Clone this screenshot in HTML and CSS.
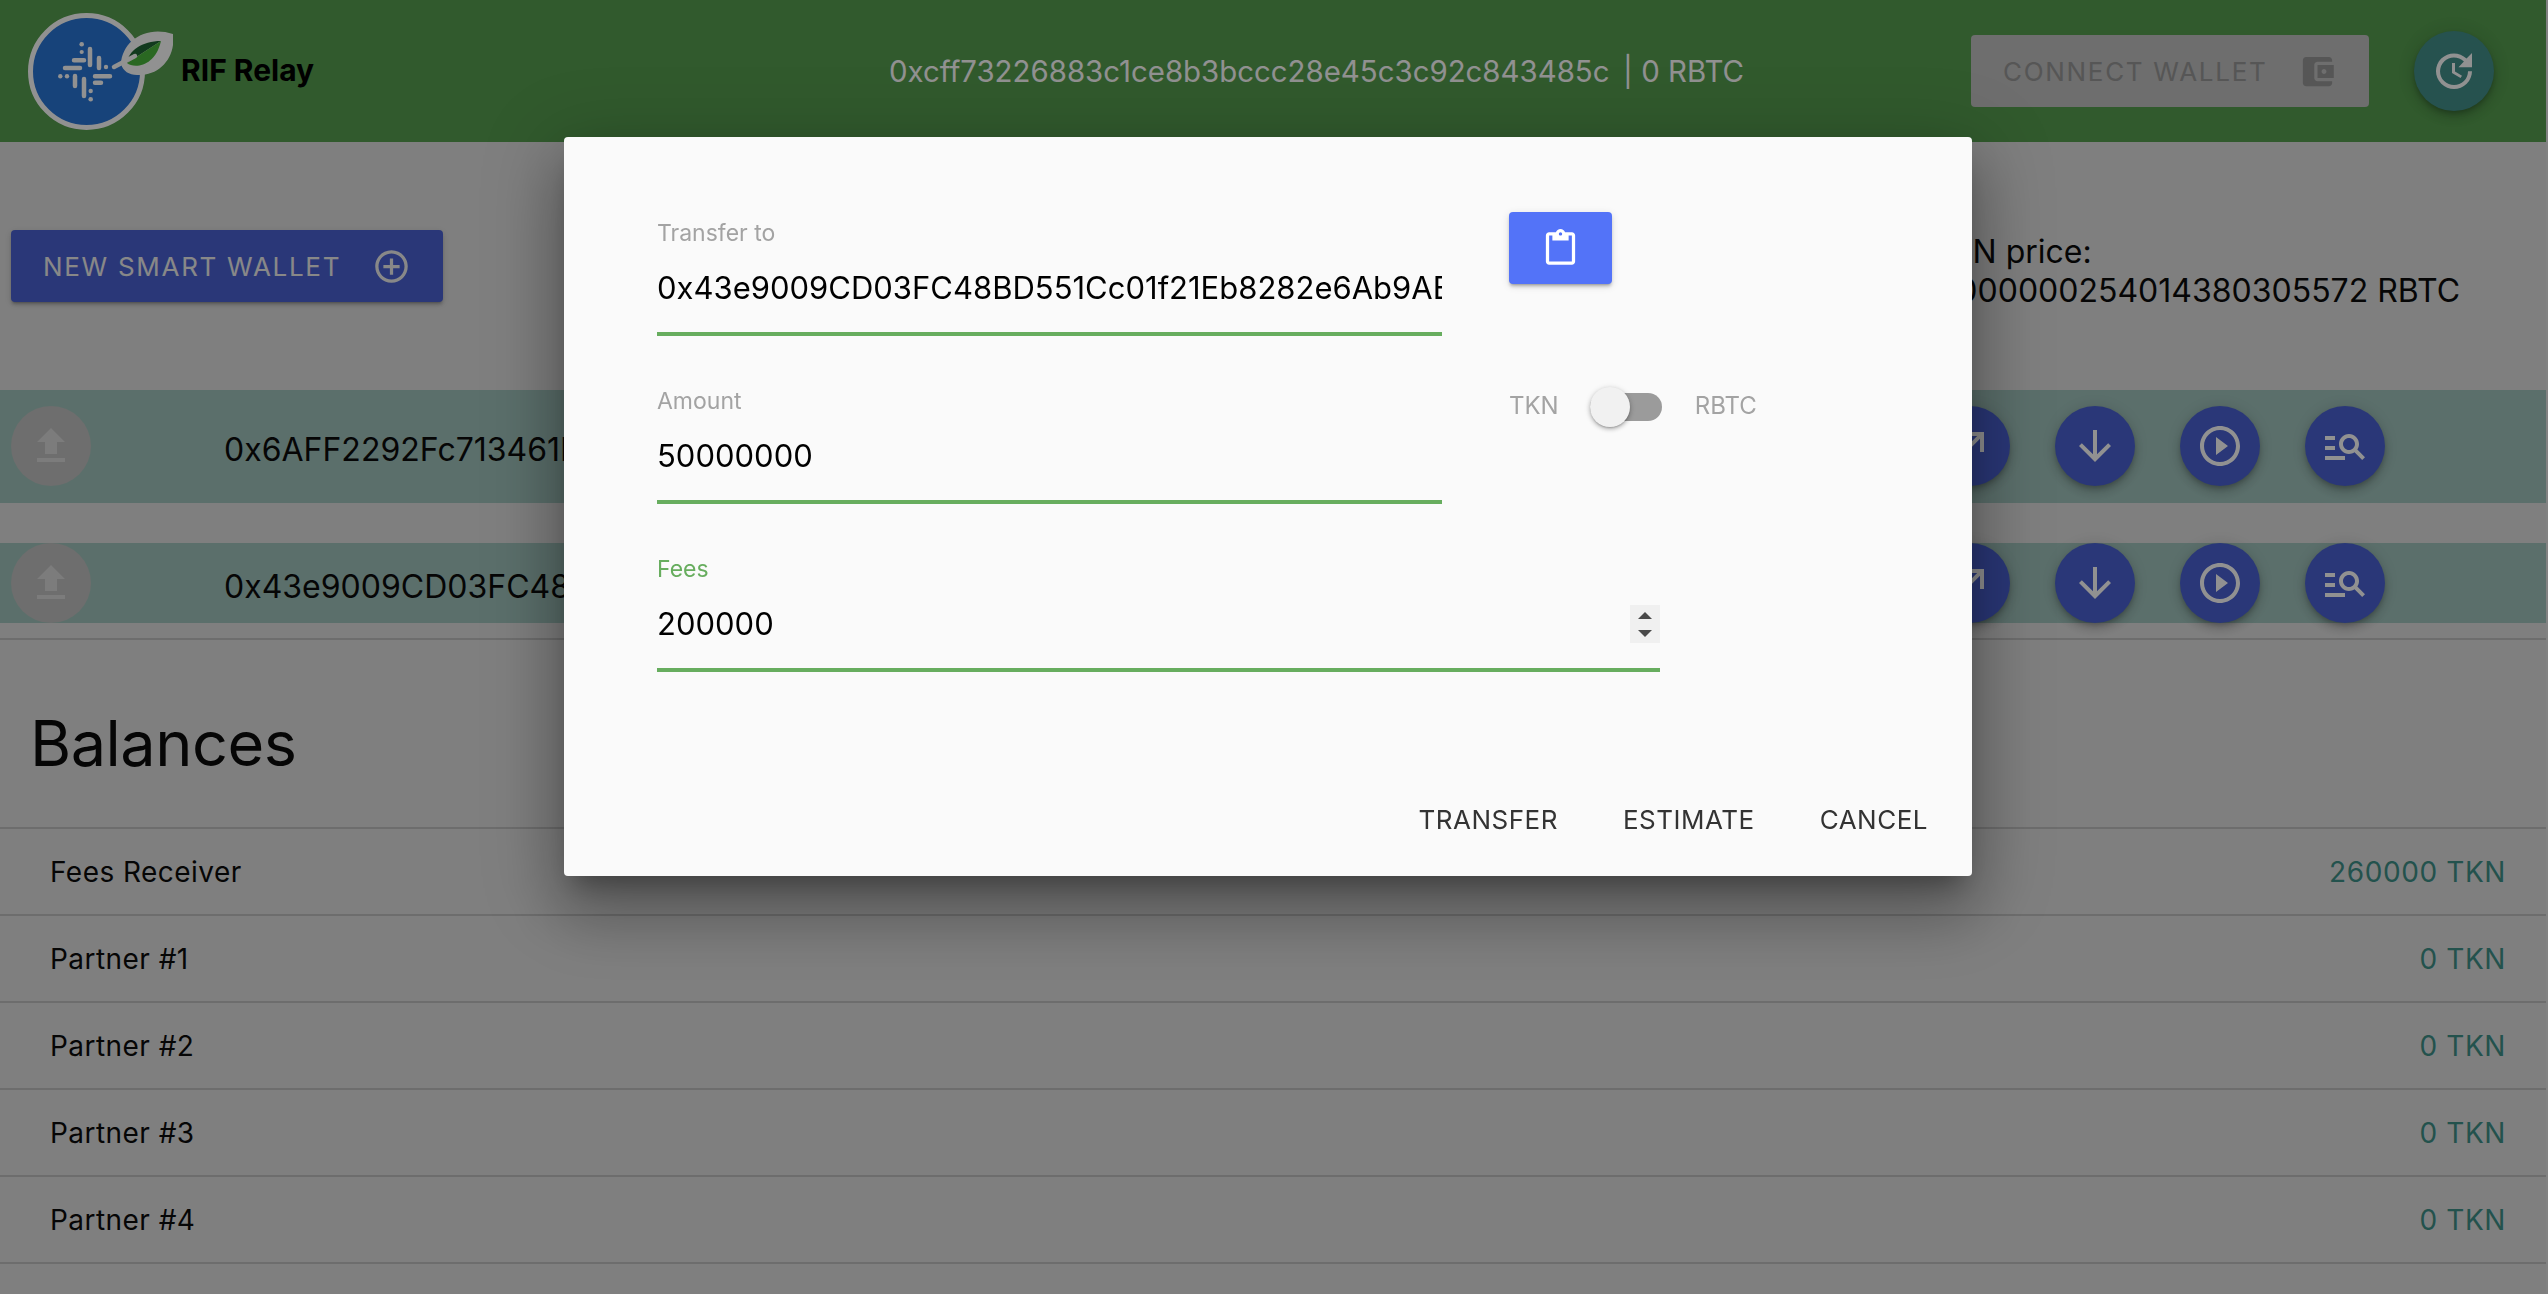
FILE: index.html
```html
<!DOCTYPE html>
<html lang="en">
<head>
<meta charset="utf-8">
<title>RIF Relay</title>
<link rel="stylesheet" href="styles.css">
</head>
<body>
<div class="page">
  <header class="topbar">
    <div class="brand">
      <svg class="logo" viewBox="28 12 145 117" aria-hidden="true">
        <circle cx="86.5" cy="70.5" r="56" fill="#2a76d6" stroke="#fff" stroke-width="5"/>
        <path d="M121 63C122 40 146 24 173 33C176 56 160 75 137 74C129 74 123 70 121 63Z" fill="#fff"/>
        <path d="M127 62C128 50 142 40 161 40Z" fill="#216635"/>
        <path d="M127 62C134 68 155 66 161 40Z" fill="#4ab83d"/>
        <g stroke="#fff" stroke-width="4.5" stroke-linecap="round" fill="none">
          <path d="M114 66L135 55M90 48V64M74 59.3H84M99 57V67M65 67H80M75 75V85M84 78V95M95 75.3H110M95 81.7H101"/>
        </g>
        <g fill="#fff">
          <circle cx="81.7" cy="43.3" r="2.3"/><circle cx="81.7" cy="51" r="2.1"/><circle cx="106" cy="66" r="2.2"/>
          <circle cx="60.3" cy="75.3" r="2.2"/><circle cx="67" cy="75.3" r="2.2"/><circle cx="90.7" cy="90" r="2.2"/><circle cx="90.7" cy="98.3" r="2.3"/>
        </g>
      </svg>
      <span class="brand-name">RIF Relay</span>
    </div>
    <div class="account">0xcff73226883c1ce8b3bccc28e45c3c92c843485c&nbsp;&#8201;| 0 RBTC</div>
    <div class="btn btn-disabled">
      <span>CONNECT WALLET</span>
      <svg class="icon-md" viewBox="0 0 24 24"><path d="M21 18v1c0 1.1-.9 2-2 2H5c-1.11 0-2-.9-2-2V5c0-1.1.89-2 2-2h14c1.1 0 2 .9 2 2v1h-9c-1.11 0-2 .9-2 2v8c0 1.1.89 2 2 2h9zm-9-2h10V8H12v8zm4-2.5c-.83 0-1.5-.67-1.5-1.5s.67-1.5 1.5-1.5 1.5.67 1.5 1.5-.67 1.5-1.5 1.5z"/></svg>
    </div>
    <div class="fab fab-teal">
      <svg class="icon-lg" viewBox="0 0 24 24"><path d="M21 10.12h-6.78l2.74-2.82c-2.73-2.7-7.15-2.8-9.88-.1-2.73 2.71-2.73 7.08 0 9.79s7.15 2.71 9.88 0C18.32 15.65 19 14.08 19 12.1h2c0 1.98-.88 4.55-2.64 6.29-3.51 3.48-9.21 3.48-12.72 0-3.5-3.47-3.53-9.11-.02-12.58s9.14-3.47 12.65 0L21 3v7.12zM12.5 8v4.25l3.5 2.08-.72 1.21L11 13V8h1.5z"/></svg>
    </div>
  </header>

  <section class="toolbar">
    <div class="btn btn-primary">
      <span>NEW SMART WALLET</span>
      <svg class="icon-md" viewBox="0 0 24 24"><path d="M13 7h-2v4H7v2h4v4h2v-4h4v-2h-4V7zm-1-5C6.48 2 2 6.48 2 12s4.48 10 10 10 10-4.48 10-10S17.52 2 12 2zm0 18c-4.41 0-8-3.59-8-8s3.59-8 8-8 8 3.59 8 8-3.59 8-8 8z"/></svg>
    </div>
    <div class="price"><span class="price-label">TKN price:</span><br>0.0000000254014380305572 RBTC</div>
  </section>

  <section class="wallets">
    <div class="wallet wallet-first">
      <div class="fab fab-off"><svg class="icon-lg" viewBox="0 0 24 24"><path d="M9 16h6v-6h4l-7-7-7 7h4v6zm-4 2h14v2H5v-2z"/></svg></div>
      <div class="wallet-address">0x6AFF2292Fc713461FdE5b2A39B4bB43dF82e6c1A</div>
      <div class="wallet-actions">
        <div class="fab fab-blue"><svg class="icon-lg" viewBox="0 0 24 24"><path d="M9 5v2h6.59L4 18.59 5.41 20 17 8.41V15h2V5z"/></svg></div>
        <div class="fab fab-blue"><svg class="icon-lg" viewBox="0 0 24 24"><path d="M20 12l-1.41-1.41L13 16.17V4h-2v12.17l-5.58-5.59L4 12l8 8 8-8z"/></svg></div>
        <div class="fab fab-blue"><svg class="icon-lg" viewBox="0 0 24 24"><path d="M10 16.5l6-4.5-6-4.5v9zM12 2C6.48 2 2 6.48 2 12s4.48 10 10 10 10-4.48 10-10S17.52 2 12 2zm0 18c-4.41 0-8-3.59-8-8s3.59-8 8-8 8 3.59 8 8-3.59 8-8 8z"/></svg></div>
        <div class="fab fab-blue"><svg class="icon-lg" viewBox="0 0 24 24"><path d="M7 9H2V7h5v2zm0 3H2v2h5v-2zm13.59 7l-3.83-3.83c-.8.52-1.74.83-2.76.83-2.76 0-5-2.24-5-5s2.24-5 5-5 5 2.24 5 5c0 1.02-.31 1.96-.83 2.75L22 17.59 20.59 19zM17 11c0-1.65-1.35-3-3-3s-3 1.35-3 3 1.35 3 3 3 3-1.35 3-3zM2 19h10v-2H2v2z"/></svg></div>
      </div>
    </div>
    <div class="wallet">
      <div class="fab fab-off"><svg class="icon-lg" viewBox="0 0 24 24"><path d="M9 16h6v-6h4l-7-7-7 7h4v6zm-4 2h14v2H5v-2z"/></svg></div>
      <div class="wallet-address">0x43e9009CD03FC48BD551Cc01f21Eb8282e6Ab9AE</div>
      <div class="wallet-actions">
        <div class="fab fab-blue"><svg class="icon-lg" viewBox="0 0 24 24"><path d="M9 5v2h6.59L4 18.59 5.41 20 17 8.41V15h2V5z"/></svg></div>
        <div class="fab fab-blue"><svg class="icon-lg" viewBox="0 0 24 24"><path d="M20 12l-1.41-1.41L13 16.17V4h-2v12.17l-5.58-5.59L4 12l8 8 8-8z"/></svg></div>
        <div class="fab fab-blue"><svg class="icon-lg" viewBox="0 0 24 24"><path d="M10 16.5l6-4.5-6-4.5v9zM12 2C6.48 2 2 6.48 2 12s4.48 10 10 10 10-4.48 10-10S17.52 2 12 2zm0 18c-4.41 0-8-3.59-8-8s3.59-8 8-8 8 3.59 8 8-3.59 8-8 8z"/></svg></div>
        <div class="fab fab-blue"><svg class="icon-lg" viewBox="0 0 24 24"><path d="M7 9H2V7h5v2zm0 3H2v2h5v-2zm13.59 7l-3.83-3.83c-.8.52-1.74.83-2.76.83-2.76 0-5-2.24-5-5s2.24-5 5-5 5 2.24 5 5c0 1.02-.31 1.96-.83 2.75L22 17.59 20.59 19zM17 11c0-1.65-1.35-3-3-3s-3 1.35-3 3 1.35 3 3 3 3-1.35 3-3zM2 19h10v-2H2v2z"/></svg></div>
      </div>
    </div>
  </section>

  <section class="balances">
    <h1 class="balances-title">Balances</h1>
    <ul class="balance-list">
      <li class="balance-item"><span>Fees Receiver</span><span class="balance-value">260000 TKN</span></li>
      <li class="balance-item"><span>Partner #1</span><span class="balance-value">0 TKN</span></li>
      <li class="balance-item"><span>Partner #2</span><span class="balance-value">0 TKN</span></li>
      <li class="balance-item"><span>Partner #3</span><span class="balance-value">0 TKN</span></li>
      <li class="balance-item"><span>Partner #4</span><span class="balance-value">0 TKN</span></li>
    </ul>
  </section>
</div>

<div class="backdrop"></div>

<div class="modal">
  <div class="modal-form">
    <div class="field">
      <div class="field-label">Transfer to</div>
      <div class="field-value">0x43e9009CD03FC48BD551Cc01f21Eb8282e6Ab9AE</div>
    </div>
    <div class="side">
      <div class="paste-btn">
        <svg class="icon-md" viewBox="0 0 24 24"><path d="M19 2h-4.18C14.4.84 13.3 0 12 0c-1.3 0-2.4.84-2.82 2H5c-1.1 0-2 .9-2 2v16c0 1.1.9 2 2 2h14c1.1 0 2-.9 2-2V4c0-1.1-.9-2-2-2zm-7 0c.55 0 1 .45 1 1s-.45 1-1 1-1-.45-1-1 .45-1 1-1zm7 18H5V4h2v3h10V4h2v16z"/></svg>
      </div>
    </div>
    <div class="field">
      <div class="field-label">Amount</div>
      <div class="field-value">50000000</div>
    </div>
    <div class="side side-switch">
      <span>TKN</span>
      <span class="switch"><span class="switch-thumb"></span></span>
      <span>RBTC</span>
    </div>
    <div class="field field-wide">
      <div class="field-label field-label-active">Fees</div>
      <div class="field-value field-value-number">
        <span>200000</span>
        <span class="spinner"><span class="spin-up"></span><span class="spin-down"></span></span>
      </div>
    </div>
  </div>
  <div class="modal-actions">
    <span class="action">TRANSFER</span>
    <span class="action">ESTIMATE</span>
    <span class="action">CANCEL</span>
  </div>
</div>
</body>
</html>
```

FILE: styles.css
```css
* { box-sizing: border-box; }
html, body { margin: 0; height: 100%; overflow: hidden; }
body {
  background: #e4e4e4;
  font-family: Inter, "Liberation Sans", sans-serif;
  color: #0c0c0c;
}
.page { width: 2546px; background: #e0e0e0; height: 1294px; overflow: hidden; }

/* top bar */
.topbar { height: 142px; background: #569e4f; display: flex; align-items: center; padding-right: 52px; }
.brand { flex: 0 0 889px; display: flex; align-items: center; padding-left: 28px; }
.logo { width: 145px; height: 117px; }
.brand-name { font-size: 30px; font-weight: 700; color: #000; margin-left: 8px; margin-top: -2px; }
.account { flex: 1; font-size: 29.4px; color: #fff; }

.btn { height: 72px; border-radius: 4px; display: flex; align-items: center; font-size: 26px; letter-spacing: 1.7px; }
.btn-disabled { width: 398px; padding-left: 32px; background: #c1c1c1; color: #979797; gap: 31px; }
.btn-disabled svg { fill: #979797; }
.btn-primary { width: 432px; margin-left: 11px; margin-top: 88px; padding-left: 32px; gap: 31px; background: #4a62d3; color: #f0f0f0;
  box-shadow: 0 3px 2px -2px rgba(0,0,0,.2), 0 3px 3px 0 rgba(0,0,0,.14), 0 2px 8px 0 rgba(0,0,0,.12); }
.btn-primary svg { fill: #f0f0f0; }
.icon-md { width: 39px; height: 39px; flex: none; }
.icon-lg { width: 48px; height: 48px; flex: none; }

.fab { width: 80px; height: 80px; border-radius: 50%; display: flex; align-items: center; justify-content: center; flex: none;
  box-shadow: 0 3px 5px -1px rgba(0,0,0,.2), 0 6px 10px 0 rgba(0,0,0,.14), 0 1px 18px 0 rgba(0,0,0,.12); }
.fab svg { fill: #fff; }
.fab-teal { background: #43908c; margin-left: 45px; }
.fab-blue { background: #4a62d3; }
.fab-off { background: #c1c1c1; box-shadow: none; margin-left: 11px; }
.fab-off svg { fill: #dbdbdb; }

/* toolbar */
.toolbar { height: 248px; display: flex; align-items: flex-start; }
.price { margin-left: auto; margin-right: 86px; margin-top: 90px; font-size: 32px; line-height: 39px; white-space: nowrap; }
.price-label { margin-left: 21px; }

/* wallet rows */
.wallets { display: flex; flex-direction: column; gap: 40px; padding-bottom: 15px; border-bottom: 2px solid #c0c0c0; }
.wallet { background: #a1c4bd; display: flex; align-items: flex-start; height: 80px; }
.wallet-first { height: 113px; padding-top: 16px; }
.wallet-address { margin-left: 133px; font-size: 32px; line-height: 88px; white-space: nowrap; }
.wallet-actions { margin-left: auto; margin-right: 161px; display: flex; gap: 45px; }

/* balances */
.balances-title { margin: 0; height: 187px; padding: 65px 0 0 30px; font-size: 63px; line-height: 76px; font-weight: 400; letter-spacing: -.5px; }
.balance-list { list-style: none; margin: 0; padding: 0; border-top: 2px solid #c0c0c0; }
.balance-item { height: 87px; border-bottom: 2px solid #c0c0c0; padding: 0 40px 0 50px; display: flex; justify-content: space-between; align-items: center; font-size: 28px; letter-spacing: .45px; }
.balance-value { color: #3f9088; letter-spacing: .6px; }

/* dialog */
.backdrop { position: fixed; inset: 0; background: rgba(0,0,0,.43); }
.modal { position: absolute; left: 564px; top: 137px; width: 1408px; height: 739px; background: #fafafa; border-radius: 4px; padding: 79px 27px 20px 93px;
  box-shadow: 0 39px 62px 5px rgba(0,0,0,.2), 0 15px 75px 13px rgba(0,0,0,.18), 0 18px 24px -11px rgba(0,0,0,.3); }
.modal-form { display: grid; grid-template-columns: 785px 1fr; column-gap: 67px; row-gap: 48px; }
.field { height: 120px; }
.field-wide { grid-column: 1 / -1; width: 1003px; }
.field-label { height: 34px; font-size: 23px; line-height: 34px; color: #a3a3a3; }
.field-label-active { color: #67ad5e; }
.field-value { height: 86px; line-height: 76px; padding-bottom: 6px; border-bottom: 4px solid #67ad5e; font-size: 31px; color: #000; white-space: nowrap; overflow: hidden; }
.field-value-number { display: flex; justify-content: space-between; align-items: center; }
.spinner { width: 30px; height: 38px; background: #f0f0f0; display: flex; flex-direction: column; align-items: center; justify-content: center; gap: 11px; }
.spin-up { width: 0; height: 0; border: 7px solid transparent; border-top: 0; border-bottom: 7px solid #4a4a4a; }
.spin-down { width: 0; height: 0; border: 7px solid transparent; border-bottom: 0; border-top: 7px solid #4a4a4a; }

.side { display: flex; align-items: flex-start; }
.paste-btn { width: 103px; height: 72px; margin-top: -4px; background: #5373f8; border-radius: 4px; display: flex; align-items: center; justify-content: center;
  box-shadow: 0 3px 2px -2px rgba(0,0,0,.2), 0 3px 3px 0 rgba(0,0,0,.14), 0 2px 8px 0 rgba(0,0,0,.12); }
.paste-btn svg { fill: #fff; }
.side-switch { height: 42px; align-items: center; font-size: 24px; color: #a3a3a3; }
.switch { width: 72px; height: 28px; margin: 4px 33px 0 31px; background: #9b9b9b; border-radius: 14px; display: flex; align-items: center; }
.switch-thumb { width: 40px; height: 40px; border-radius: 50%; background: #f1f1f1; box-shadow: 0 2px 2px -1px rgba(0,0,0,.2), 0 2px 4px 0 rgba(0,0,0,.2), 0 1px 6px 0 rgba(0,0,0,.14); }

.modal-actions { margin-top: 112px; height: 70px; display: flex; justify-content: flex-end; align-items: center; gap: 65px; padding-right: 17px; font-size: 26px; letter-spacing: .5px; color: #333; }
```
